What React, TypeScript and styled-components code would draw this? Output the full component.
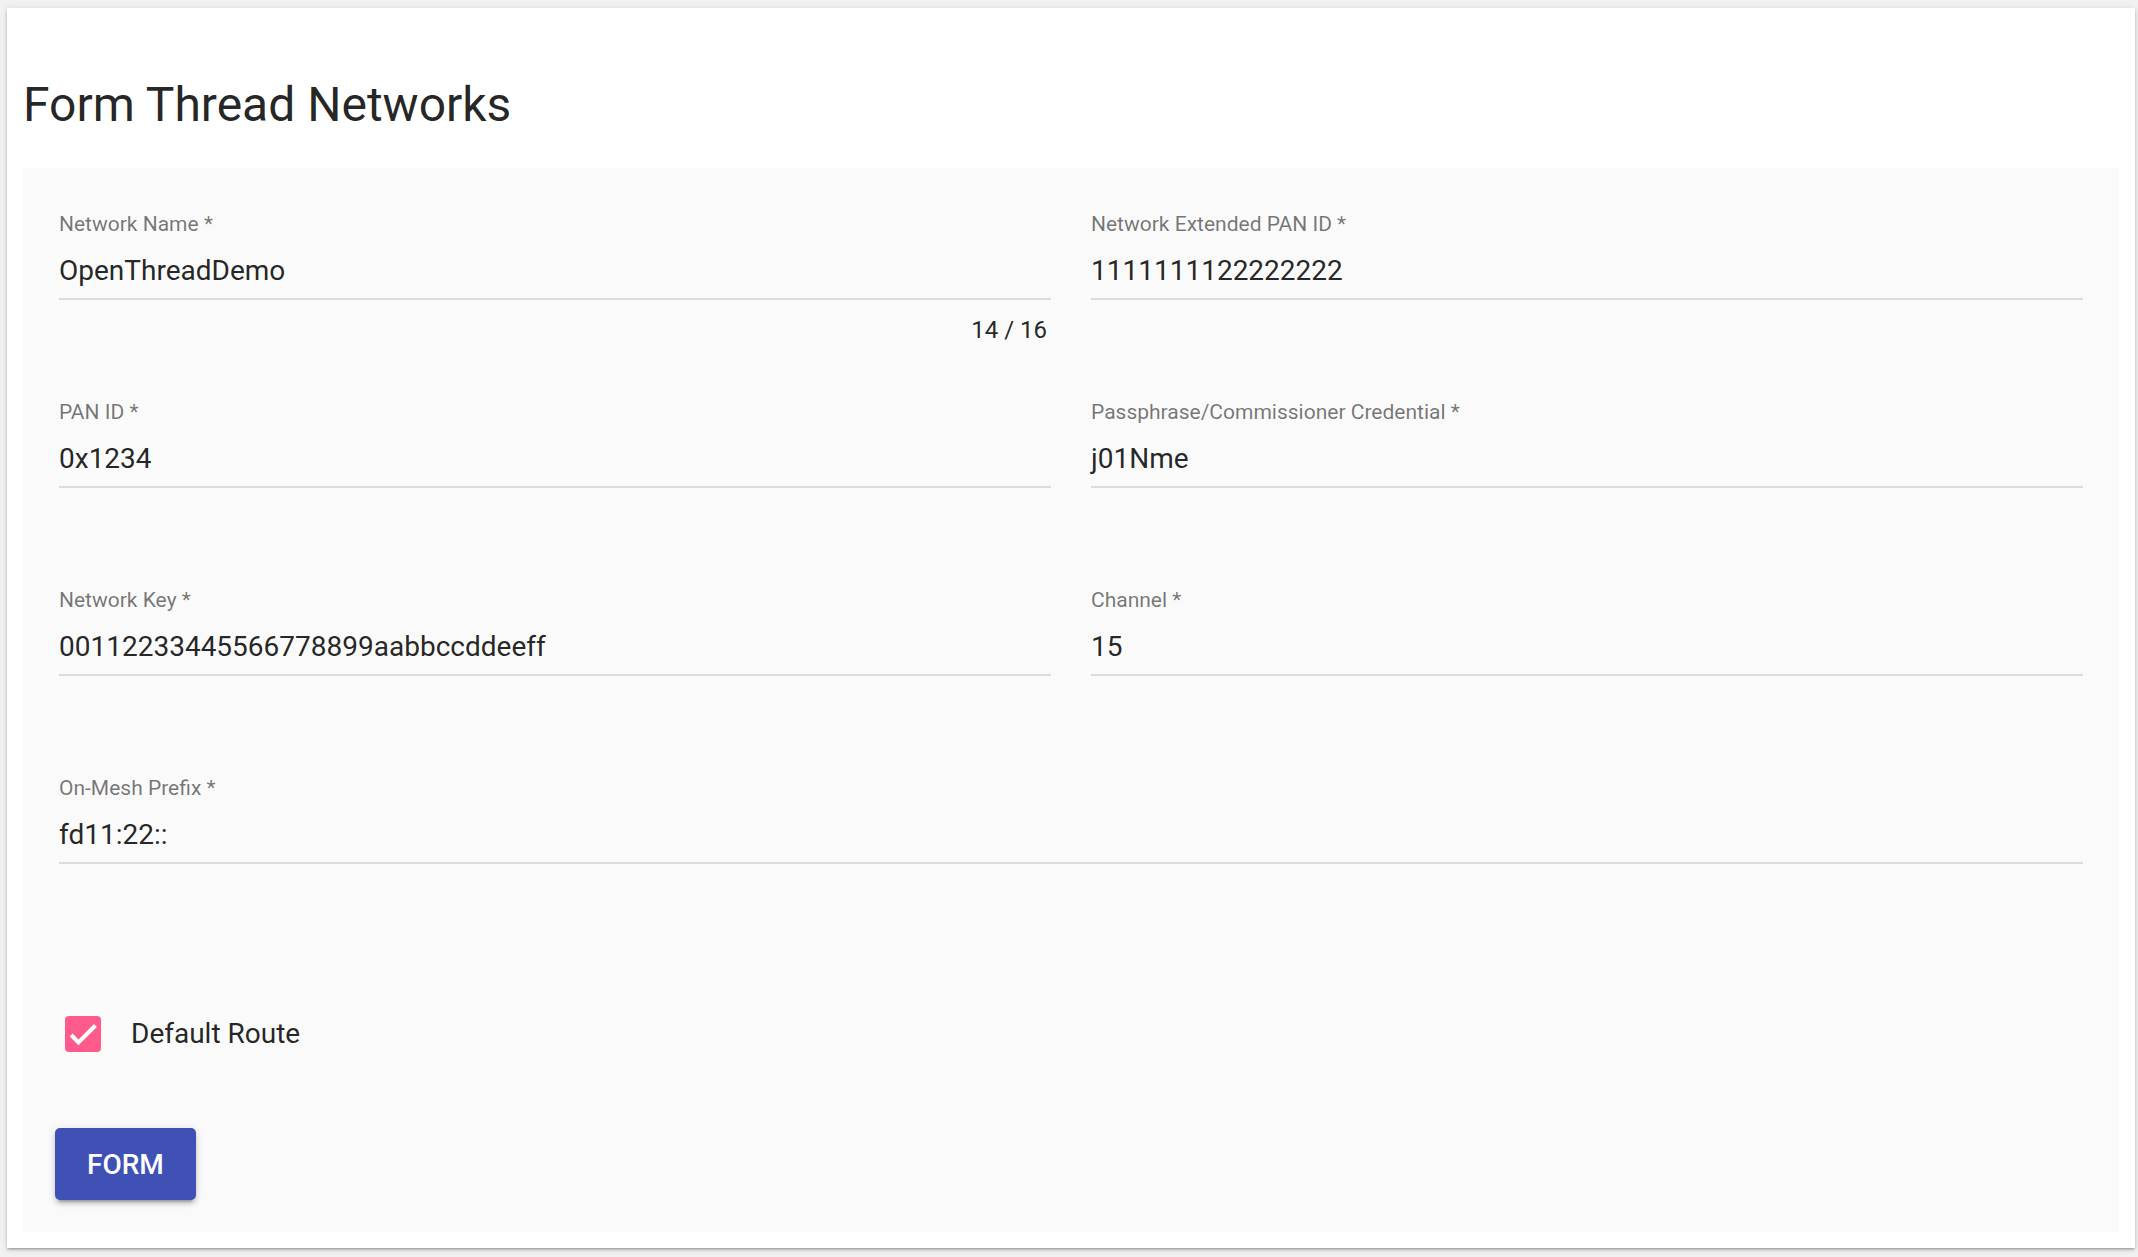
import React from "react";
import styled, { createGlobalStyle } from "styled-components";

const Global = createGlobalStyle`
  html, body {
    margin: 0;
    padding: 0;
    background: #f1f1f1;
    font-family: Roboto, "Liberation Sans", Arial, sans-serif;
  }
  * { box-sizing: border-box; }
`;

const Page = styled.div`
  padding: 8px 3px 9px 7px;
`;

const Card = styled.div`
  background: #ffffff;
  padding: 16px;
  box-shadow: 0 2px 2px -1px rgba(0, 0, 0, 0.2), 0 2px 3px 0 rgba(0, 0, 0, 0.14),
    0 1px 6px 0 rgba(0, 0, 0, 0.12);
`;

const Title = styled.h1`
  margin: 53px 0 35px 0;
  font-size: 48px;
  line-height: 56px;
  font-weight: 400;
  color: rgba(0, 0, 0, 0.87);
`;

const Panel = styled.div`
  background: #fafafa;
  padding: 44px 36px 32px 32px;
`;

const FieldGrid = styled.div`
  display: grid;
  grid-template-columns: 1fr 1fr;
  column-gap: 40px;
  margin-left: 4px;
`;

const Field = styled.div<{ $wide?: boolean }>`
  display: flex;
  flex-direction: column;
  height: 188px;
  grid-column: ${(p) => (p.$wide ? "1 / -1" : "auto")};
`;

const Label = styled.label`
  font-size: 21px;
  line-height: 24px;
  color: rgba(0, 0, 0, 0.54);
  margin-bottom: 19px;
`;

const Value = styled.div`
  font-size: 28px;
  line-height: 32px;
  color: rgba(0, 0, 0, 0.87);
  padding-bottom: 11px;
  border-bottom: 2px solid #dcdcdc;
`;

const Hint = styled.div`
  margin-top: 17px;
  font-size: 24px;
  line-height: 26px;
  color: rgba(0, 0, 0, 0.87);
  text-align: right;
  padding-right: 4px;
`;

const CheckRow = styled.label`
  display: flex;
  align-items: center;
  gap: 30px;
  margin: 52px 0 0 10px;
  font-size: 28px;
  line-height: 32px;
  color: rgba(0, 0, 0, 0.87);
`;

const Box = styled.span`
  width: 36px;
  height: 36px;
  border-radius: 4px;
  background: #ff5a8c;
  display: flex;
  align-items: center;
  justify-content: center;
`;

const Button = styled.button`
  margin-top: 76px;
  height: 72px;
  padding: 0 32px;
  border: none;
  border-radius: 5px;
  background: #3f51b5;
  color: #ffffff;
  font-family: Roboto, "Liberation Sans", Arial, sans-serif;
  font-size: 28px;
  font-weight: 500;
  box-shadow: 0 6px 2px -4px rgba(0, 0, 0, 0.2), 0 4px 4px 0 rgba(0, 0, 0, 0.14),
    0 2px 10px 0 rgba(0, 0, 0, 0.12);
  cursor: pointer;
`;

type F = { label: string; value: string; hint?: string; wide?: boolean };

const fields: F[] = [
  { label: "Network Name *", value: "OpenThreadDemo", hint: "14 / 16" },
  { label: "Network Extended PAN ID *", value: "1111111122222222" },
  { label: "PAN ID *", value: "0x1234" },
  { label: "Passphrase/Commissioner Credential *", value: "j01Nme" },
  { label: "Network Key *", value: "00112233445566778899aabbccddeeff" },
  { label: "Channel *", value: "15" },
  { label: "On-Mesh Prefix *", value: "fd11:22::", wide: true },
];

export default function App() {
  return (
    <>
      <Global />
      <Page>
        <Card>
          <Title>Form Thread Networks</Title>
          <Panel>
            <FieldGrid>
              {fields.map((f) => (
                <Field key={f.label} $wide={f.wide}>
                  <Label>{f.label}</Label>
                  <Value>{f.value}</Value>
                  {f.hint && <Hint>{f.hint}</Hint>}
                </Field>
              ))}
            </FieldGrid>
            <CheckRow>
              <Box>
                <svg width="36" height="36" viewBox="0 0 24 24">
                  <path
                    d="M4.1 12.7 9 17.6 20.3 6.3"
                    fill="none"
                    stroke="#ffffff"
                    strokeWidth="2.7"
                  />
                </svg>
              </Box>
              Default Route
            </CheckRow>
            <Button>FORM</Button>
          </Panel>
        </Card>
      </Page>
    </>
  );
}
